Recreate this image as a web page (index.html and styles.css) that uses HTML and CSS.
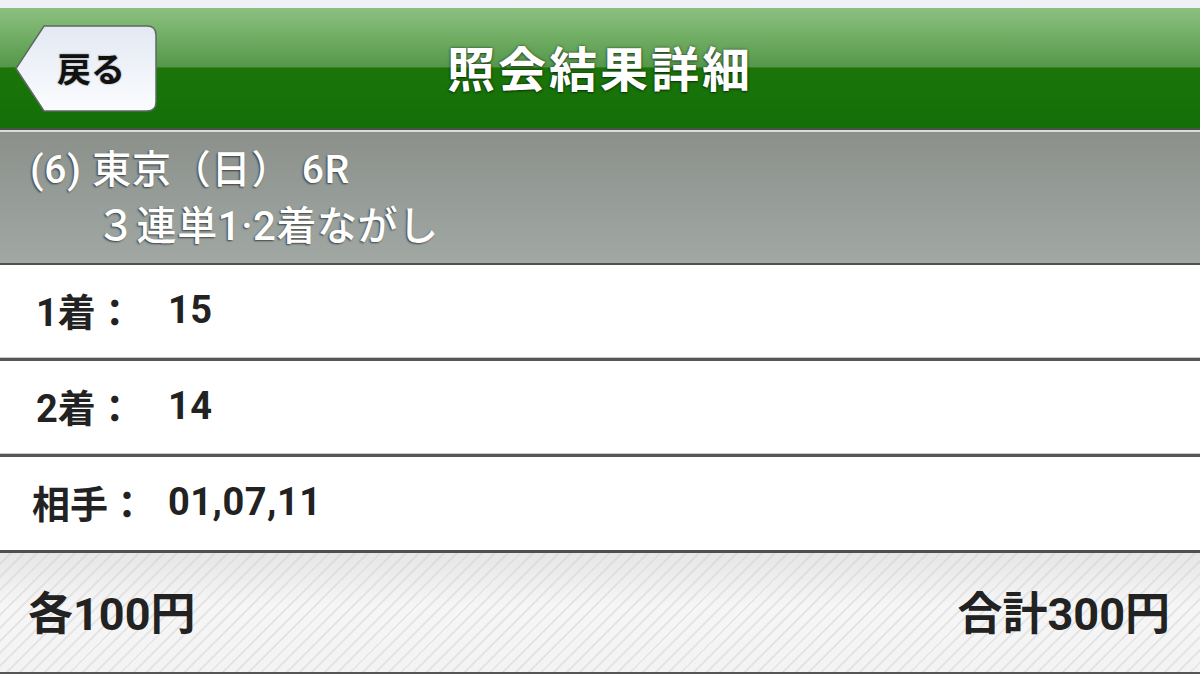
FILE: index.html
```html
<!DOCTYPE html>
<html lang="ja">
<head>
<meta charset="utf-8">
<title>照会結果詳細</title>
<link rel="stylesheet" href="styles.css">
</head>
<body>
<div class="topstrip"></div>
<header class="header">
  <div class="header-left">
    <a class="back" href="#">
      <svg class="back-bg" viewBox="0 0 142 87" width="142" height="87" aria-hidden="true">
        <defs>
          <linearGradient id="bg" x1="0" y1="0" x2="0" y2="1">
            <stop offset="0" stop-color="#e3e9f3"/>
            <stop offset="1" stop-color="#fbfcfe"/>
          </linearGradient>
        </defs>
        <path d="M29 1 H132 Q141 1 141 10 V77 Q141 86 132 86 H29 L1 43.5 Z" fill="url(#bg)" stroke="#5d6a60" stroke-width="1.5"/>
      </svg>
      <span class="back-label">戻る</span>
    </a>
  </div>
  <h1 class="title">照会結果詳細</h1>
  <div class="header-right"></div>
</header>
<section class="info">
  <div class="info-line1">(6) 東京（日） 6R</div>
  <div class="info-line2">３連単1·2着ながし</div>
</section>
<main class="rows">
  <div class="row"><span class="label">1着：</span><span class="value">15</span></div>
  <div class="row"><span class="label">2着：</span><span class="value">14</span></div>
  <div class="row last"><span class="label label-wide">相手：</span><span class="value">01,07,11</span></div>
</main>
<footer class="footer">
  <span class="each">各100円</span>
  <span class="total">合計300円</span>
</footer>
</body>
</html>
```
FILE: styles.css
```css
* { box-sizing: border-box; }
html, body {
  margin: 0;
  padding: 0;
  background: #fff;
}
body {
  width: 1200px;
  height: 685px;
  overflow: hidden;
  font-family: Roboto, "Noto Sans CJK JP", sans-serif;
  color: #222;
}
.topstrip {
  height: 8px;
  background: #eef1f5;
}
.header {
  height: 122px;
  display: grid;
  grid-template-columns: 1fr auto 1fr;
  align-items: center;
  background: linear-gradient(to bottom, #8cc081 0%, #6aa95d 30%, #55974a 49%, #1b7509 50%, #177209 75%, #156e08 100%);
  border-bottom: 2px solid #4b5049;
}
.header-left {
  padding-left: 15px;
  padding-top: 1px;
}
.back {
  position: relative;
  display: flex;
  align-items: center;
  width: 142px;
  height: 87px;
  text-decoration: none;
}
.back-bg {
  position: absolute;
  left: 0;
  top: 0;
}
.back-label {
  position: relative;
  padding-left: 42px;
  font-family: "Noto Sans CJK JP", sans-serif;
  font-weight: 700;
  font-size: 34px;
  color: #111;
  text-shadow: 0 0 2px rgba(0,0,0,0.45);
  margin-top: -2px;
}
.title {
  margin: 0;
  font-family: "Noto Sans CJK JP", sans-serif;
  font-weight: 700;
  font-size: 48px;
  line-height: 1;
  color: #fff;
  letter-spacing: 3px;
  text-shadow: 0 0 3px rgba(0,0,0,0.55), 0 1px 2px rgba(0,0,0,0.4);
  margin-top: -4px;
}
.info {
  height: 135px;
  border-top: 2px solid #d9ddd9;
  border-bottom: 2px solid #4e524e;
  background: linear-gradient(to bottom, #8b908b 0%, #969c97 50%, #a1a8a3 100%);
  padding: 16px 0 0 30px;
  color: #fff;
  font-family: Roboto, "Noto Sans CJK JP", sans-serif;
  text-shadow: -1px 1px 2px rgba(0,0,0,0.6);
}
.info-line1 {
  font-size: 39px;
  font-weight: 500;
  line-height: 44px;
  letter-spacing: 0.8px;
}
.info-line2 {
  font-size: 40px;
  font-weight: 500;
  line-height: 44px;
  padding-left: 66px;
  margin-top: 13px;
  letter-spacing: 0.6px;
}
.rows {
  display: flex;
  flex-direction: column;
}
.row {
  height: 96px;
  display: flex;
  align-items: center;
  padding-left: 32px;
  padding-bottom: 4px;
  border-bottom: 3px solid #575757;
  box-shadow: inset 0 -1px 0 #c9c9c9;
  font-size: 38px;
  font-weight: 700;
  color: #222;
}
.row.last {
  border-bottom: none;
  box-shadow: none;
  height: 93px;
}
.label {
  width: 136px;
  padding-left: 4px;
}
.label-wide {
  padding-left: 0;
}
.value {
  letter-spacing: 0.5px;
}
.footer {
  height: 124px;
  display: flex;
  justify-content: space-between;
  align-items: center;
  padding: 0 30px 0 28px;
  border-top: 3px solid #4f4f4f;
  border-bottom: 2px solid #555;
  background:
    repeating-linear-gradient(135deg, rgba(255,255,255,0) 0px, rgba(255,255,255,0) 7px, rgba(200,200,200,0.35) 7px, rgba(200,200,200,0.35) 9px),
    linear-gradient(to bottom, #e6e6e6 0%, #f6f6f6 45%, #f3f3f3 100%);
  font-size: 45px;
  font-weight: 700;
  color: #222;
}
.each, .total {
  margin-top: -4px;
}
```
